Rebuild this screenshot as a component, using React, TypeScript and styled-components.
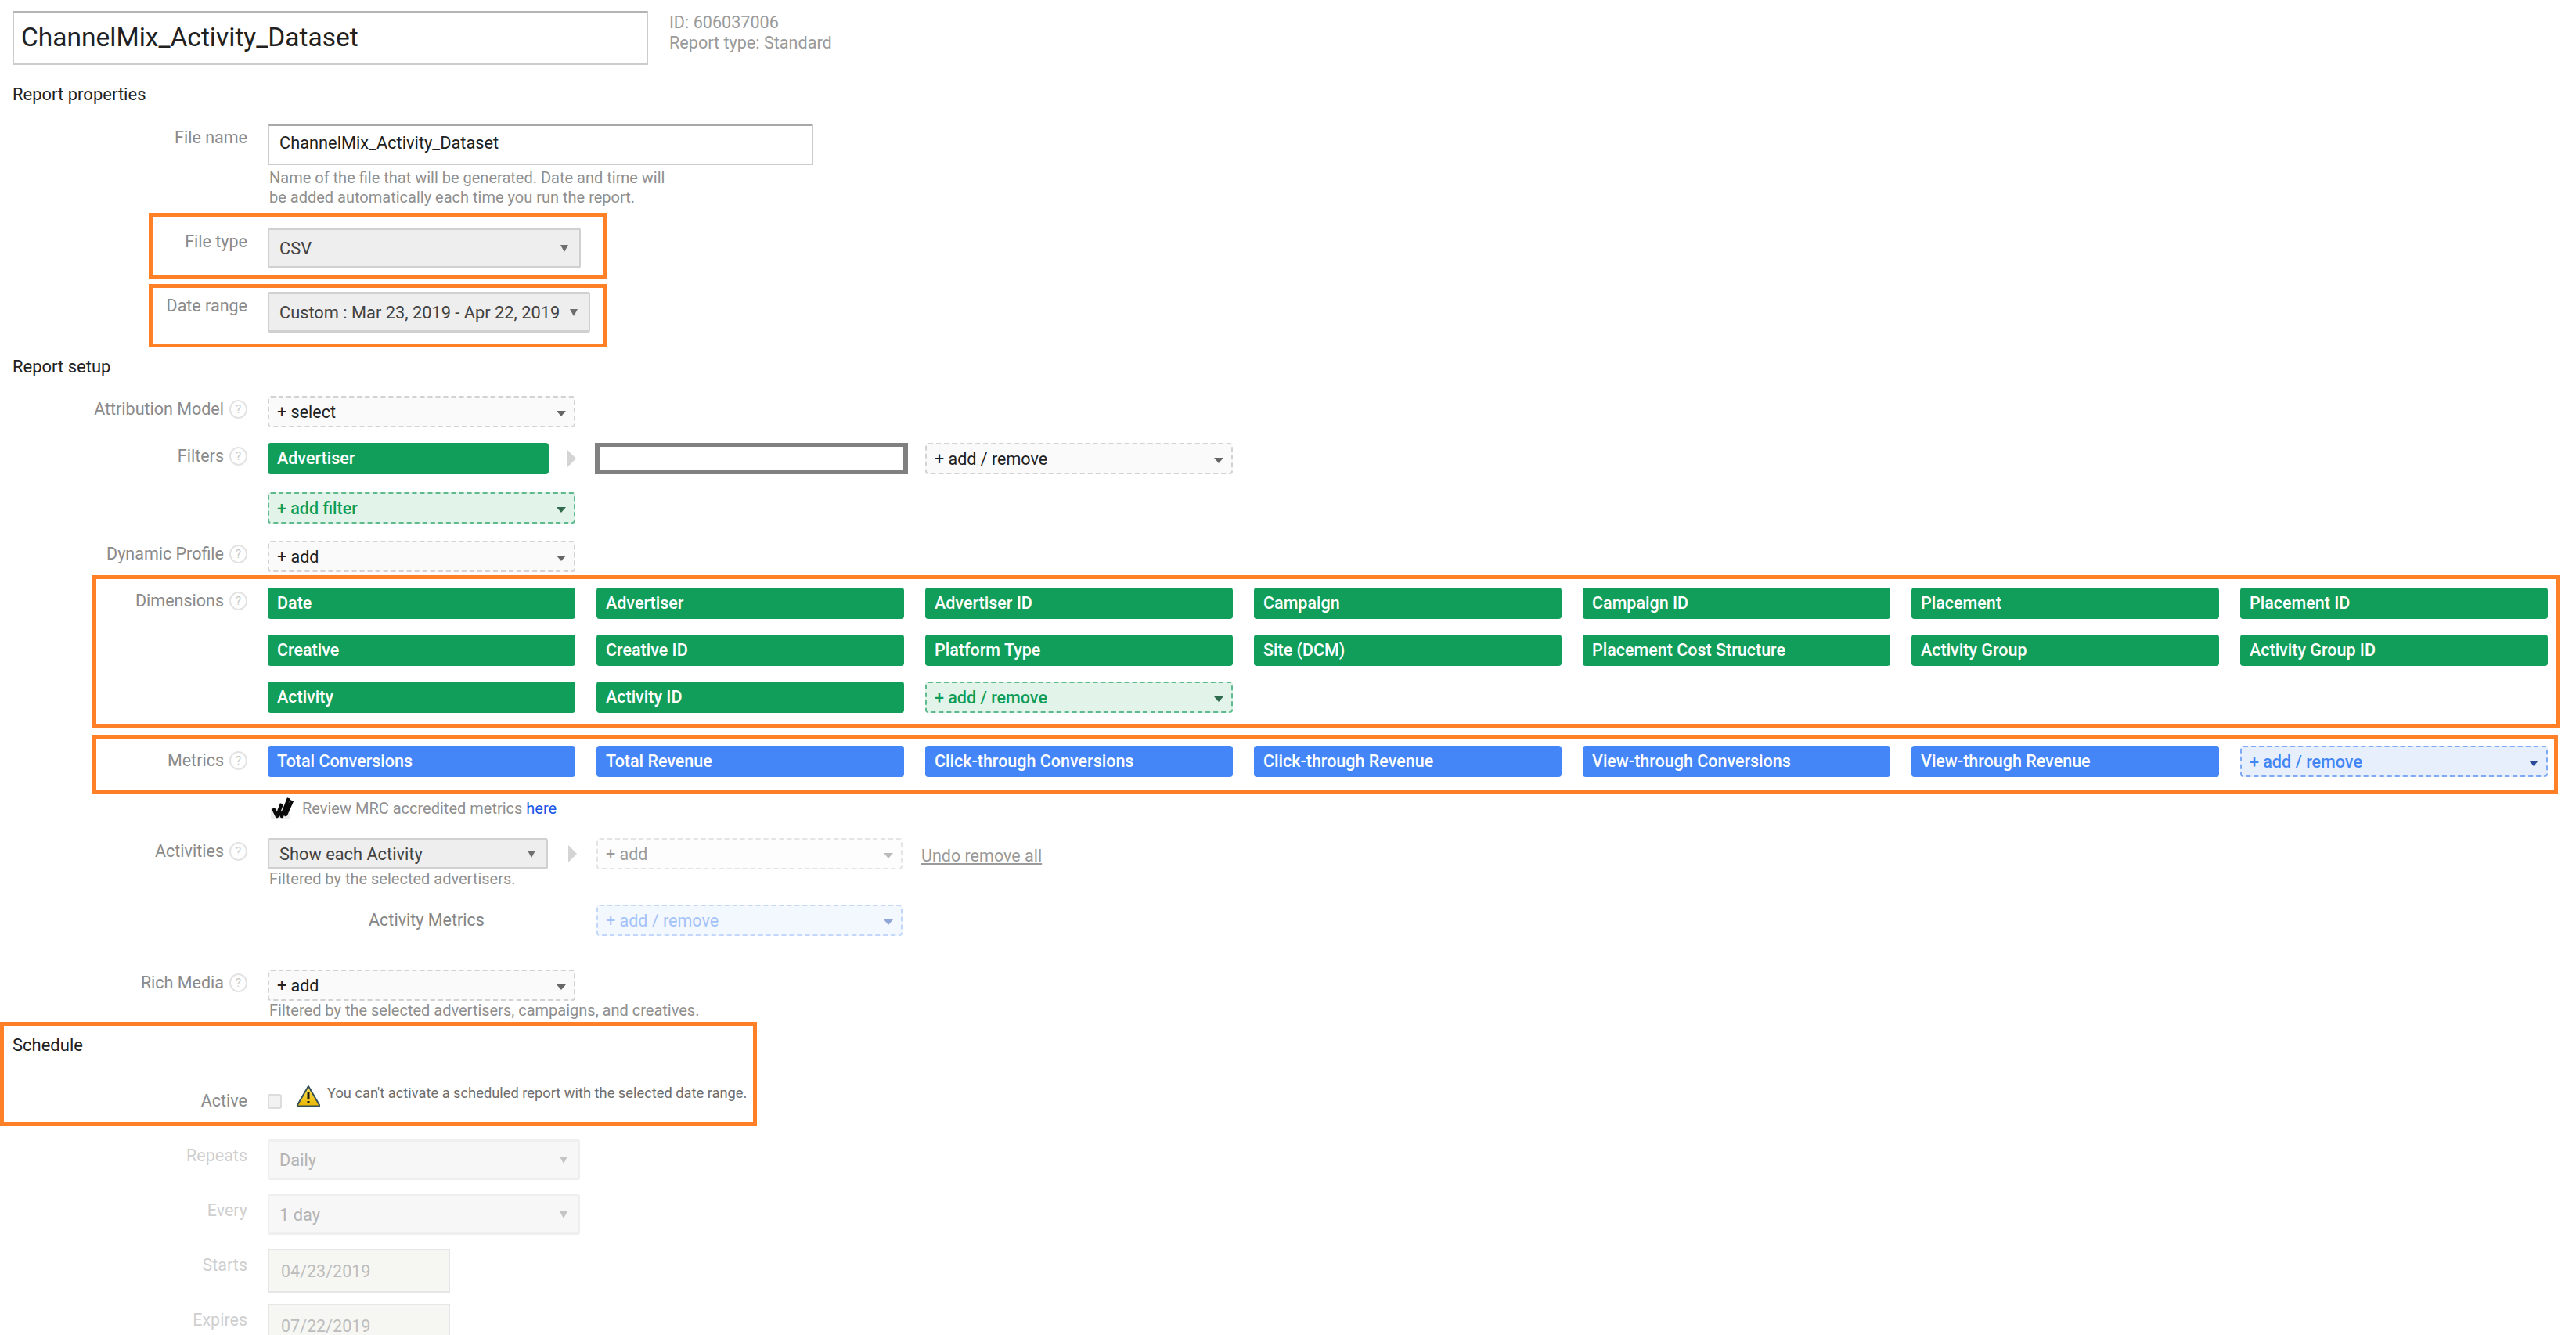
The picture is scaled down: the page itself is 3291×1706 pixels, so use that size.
import { FC, ReactNode } from "react";
import styled, { createGlobalStyle } from "styled-components";

type Tone = "neutral" | "green" | "blue" | "faint" | "paleBlue";

const dimensions = [
  "Date",
  "Advertiser",
  "Advertiser ID",
  "Campaign",
  "Campaign ID",
  "Placement",
  "Placement ID",
  "Creative",
  "Creative ID",
  "Platform Type",
  "Site (DCM)",
  "Placement Cost Structure",
  "Activity Group",
  "Activity Group ID",
  "Activity",
  "Activity ID",
];

const metrics = [
  "Total Conversions",
  "Total Revenue",
  "Click-through Conversions",
  "Click-through Revenue",
  "View-through Conversions",
  "View-through Revenue",
];

const tones = {
  neutral: { bg: "#fafafa", border: "#d2d2d2", text: "#212121", caret: "#666666" },
  green: { bg: "#e2f3ea", border: "#5dba8c", text: "#0f9d58", caret: "#2f6b4c" },
  blue: { bg: "#e8effc", border: "#7ea9f6", text: "#4285f4", caret: "#2b4a9a" },
  faint: { bg: "#fdfdfd", border: "#e4e4e4", text: "#9a9a9a", caret: "#bbbbbb" },
  paleBlue: { bg: "#f3f7fe", border: "#c3d7fb", text: "#a3c2f9", caret: "#8fa8d8" },
};

const GlobalStyle = createGlobalStyle`
  html, body {
    margin: 0;
    padding: 0;
    background: #ffffff;
    font-family: Roboto, "Liberation Sans", sans-serif;
    overflow: hidden;
  }
`;

const Page = styled.div`
  width: 3291px;
  height: 1706px;
  overflow: hidden;
  display: flex;
  flex-direction: column;
  position: relative;
`;

const TitleBar = styled.div`
  display: flex;
  margin: 14px 0 0 16px;
  gap: 27px;
`;

const TitleInput = styled.div`
  width: 812px;
  height: 69px;
  box-sizing: border-box;
  border: 2px solid #cccccc;
  border-top: 3px solid #b4b4b4;
  padding-left: 9px;
  font-size: 33.5px;
  line-height: 62px;
  color: #212121;
`;

const ReportMeta = styled.div`
  font-size: 21.6px;
  line-height: 26px;
  color: #9a9a9a;
  padding-top: 2px;
`;

const Heading = styled.div<{ $top: number }>`
  position: relative;
  margin: ${(p) => p.$top}px 0 0 16px;
  font-size: 22px;
  line-height: 30px;
  color: #212121;
`;

const Row = styled.div<{ $top: number }>`
  position: relative;
  display: flex;
  gap: 26px;
  margin-top: ${(p) => p.$top}px;
`;

const LabelBox = styled.div<{ $pad: number; $muted?: boolean }>`
  width: 316px;
  flex: none;
  box-sizing: border-box;
  padding-top: ${(p) => p.$pad}px;
  display: flex;
  justify-content: flex-end;
  gap: 7px;
  font-size: 21.5px;
  line-height: 24px;
  color: ${(p) => (p.$muted ? "#cfcfcf" : "#8a8a8a")};
`;

const HelpIcon = styled.span`
  width: 23px;
  height: 24px;
  box-sizing: border-box;
  border: 2px solid #e3e3e3;
  border-radius: 50%;
  color: #c8c8c8;
  font-size: 15px;
  line-height: 20px;
  text-align: center;
`;

const Frame = styled.div<{ $left: number; $top: number; $width: number; $height: number }>`
  position: absolute;
  left: ${(p) => p.$left}px;
  top: ${(p) => p.$top}px;
  width: ${(p) => p.$width}px;
  height: ${(p) => p.$height}px;
  box-sizing: border-box;
  border: 5px solid #ff8027;
  pointer-events: none;
`;

const TextInput = styled.div`
  width: 697px;
  height: 53px;
  box-sizing: border-box;
  border: 2px solid #cccccc;
  border-top: 3px solid #a8a8a8;
  padding-left: 13px;
  font-size: 21.8px;
  line-height: 44px;
  color: #212121;
`;

const Hint = styled.div<{ $width?: number; $top?: number }>`
  margin: ${(p) => p.$top ?? 0}px 0 0 344px;
  width: ${(p) => p.$width ?? 900}px;
  font-size: 20px;
  line-height: 25px;
  color: #8f8f8f;
`;

const Select = styled.div<{ $width: number; $disabled?: boolean }>`
  width: ${(p) => p.$width}px;
  height: 52px;
  box-sizing: border-box;
  background: ${(p) => (p.$disabled ? "#f7f7f7" : "#eeeeee")};
  border: 2px solid ${(p) => (p.$disabled ? "#efefef" : "#d0d0d0")};
  border-top-width: 3px;
  border-bottom-width: 3px;
  border-radius: 3px;
  padding: 0 14px 0 13px;
  display: flex;
  align-items: center;
  justify-content: space-between;
  font-size: 21.8px;
  white-space: nowrap;
  color: ${(p) => (p.$disabled ? "#b4b4b4" : "#424242")};
`;

const SelectCaret = styled.span<{ $disabled?: boolean }>`
  width: 0;
  height: 0;
  border-left: 5px solid transparent;
  border-right: 5px solid transparent;
  border-top: 9px solid ${(p) => (p.$disabled ? "#c4c4c4" : "#6e6e6e")};
`;

const ShortSelect = styled(Select)`
  height: 40px;
`;

const Chip = styled.div<{ $fill: "green" | "blue"; $width?: number }>`
  width: ${(p) => p.$width ?? 393}px;
  height: 40px;
  box-sizing: border-box;
  border-radius: 4px;
  padding-left: 12px;
  background: ${(p) => (p.$fill === "green" ? "#119e5a" : "#4486f8")};
  color: #ffffff;
  font-size: 21.5px;
  font-weight: 500;
  line-height: 40px;
  white-space: nowrap;
`;

const AddChip = styled.div<{ $tone: Tone; $width?: number }>`
  width: ${(p) => p.$width ?? 393}px;
  height: 40px;
  box-sizing: border-box;
  border-radius: 4px;
  padding: 0 10px;
  background: ${(p) => tones[p.$tone].bg};
  border: 2px dashed ${(p) => tones[p.$tone].border};
  color: ${(p) => tones[p.$tone].text};
  font-size: 21.5px;
  font-weight: ${(p) => (p.$tone === "green" || p.$tone === "blue" ? 500 : 400)};
  line-height: 35px;
  display: flex;
  justify-content: space-between;
  align-items: center;
  white-space: nowrap;
`;

const ChipCaret = styled.span<{ $tone: Tone }>`
  width: 0;
  height: 0;
  margin-top: 4px;
  border-left: 6px solid transparent;
  border-right: 6px solid transparent;
  border-top: 7px solid ${(p) => tones[p.$tone].caret};
`;

const ChipGrid = styled.div`
  display: grid;
  grid-template-columns: repeat(7, 393px);
  column-gap: 27px;
  row-gap: 20px;
`;

const FieldRow = styled.div`
  display: flex;
  align-items: center;
`;

const ArrowSlot = styled.div<{ $width: number }>`
  width: ${(p) => p.$width}px;
  display: flex;
  justify-content: center;
`;

const Arrow = styled.span`
  width: 0;
  height: 0;
  border-top: 11px solid transparent;
  border-bottom: 11px solid transparent;
  border-left: 11px solid #d4d4d4;
`;

const FocusInput = styled.div`
  width: 400px;
  height: 40px;
  box-sizing: border-box;
  border: 6px solid #808080;
  border-top-width: 5px;
  margin-right: 22px;
`;

const UndoLink = styled.span`
  margin: 5px 0 0 24px;
  color: #9a9a9a;
  font-size: 21.5px;
  text-decoration: underline;
`;

const ReviewRow = styled.div`
  display: flex;
  align-items: flex-end;
  gap: 10px;
  margin: 23px 0 0 345px;
  height: 31px;
  font-size: 20px;
  line-height: 27px;
  color: #8f8f8f;
`;

const ReviewLink = styled.span`
  color: #1a56e8;
`;

const SubLabel = styled.div`
  width: 406px;
  flex: none;
  margin: 0 14px 0 342px;
  text-align: center;
  font-size: 21.5px;
  line-height: 40px;
  color: #858585;
`;

const Checkbox = styled.span`
  display: block;
  width: 18px;
  height: 19px;
  box-sizing: border-box;
  border: 2px solid #dcdcdc;
  border-radius: 3px;
  background: #f2f2f2;
`;

const ActiveField = styled.div`
  display: flex;
  align-items: flex-start;
  height: 34px;
`;

const CheckSlot = styled.div`
  width: 36px;
  padding-top: 12px;
`;

const WarnText = styled.span`
  margin-left: 8px;
  font-size: 18.3px;
  line-height: 22px;
  color: #6e6e6e;
  white-space: nowrap;
`;

const DateInput = styled.div`
  width: 233px;
  height: 56px;
  box-sizing: border-box;
  background: #f6f7f3;
  border: 2px solid #e6e6e6;
  padding-left: 15px;
  font-size: 21.5px;
  line-height: 54px;
  color: #bdbdbd;
`;

const Label: FC<{ pad?: number; help?: boolean; muted?: boolean; children: ReactNode }> = ({
  pad = 5,
  help,
  muted,
  children,
}) => (
  <LabelBox $pad={pad} $muted={muted}>
    <span>{children}</span>
    {help && <HelpIcon>?</HelpIcon>}
  </LabelBox>
);

const Add: FC<{ tone: Tone; width?: number; children: ReactNode }> = ({ tone, width, children }) => (
  <AddChip $tone={tone} $width={width}>
    <span>{children}</span>
    <ChipCaret $tone={tone} />
  </AddChip>
);

const MrcIcon = () => (
  <svg width="31" height="32" viewBox="0 0 31 32">
    <rect x="1" y="17" width="25" height="14" fill="#ececec" />
    <path
      d="M4 18 L9 28 L15 12 M11 20 L15 28 L24 5 M18 23 L20 26 L28 8"
      fill="none"
      stroke="#0a0a0a"
      strokeWidth="4.500"
      strokeLinejoin="round"
    />
  </svg>
);

const WarningIcon = () => (
  <svg width="32" height="29" viewBox="0 0 32 29">
    <defs>
      <linearGradient id="warnFill" x1="0" y1="0" x2="0" y2="1">
        <stop offset="0" stopColor="#ffe45c" />
        <stop offset="1" stopColor="#e8b400" />
      </linearGradient>
    </defs>
    <path
      d="M16 2 L30 26 Q30.500 27.500 29 27.500 L3 27.500 Q1.500 27.500 2 26 Z"
      fill="url(#warnFill)"
      stroke="#34505a"
      strokeWidth="2"
      strokeLinejoin="round"
    />
    <rect x="14.500" y="9" width="3" height="10" fill="#1a1a1a" />
    <rect x="14.500" y="21" width="3" height="3" fill="#1a1a1a" />
  </svg>
);

const App: FC = () => {
  return (
    <Page>
      <GlobalStyle />
      <TitleBar>
        <TitleInput>ChannelMix_Activity_Dataset</TitleInput>
        <ReportMeta>
          ID: 606037006
          <br />
          Report type: Standard
        </ReportMeta>
      </TitleBar>

      <Heading $top={23}>Report properties</Heading>

      <Row $top={22}>
        <Label pad={6}>File name</Label>
        <TextInput>ChannelMix_Activity_Dataset</TextInput>
      </Row>
      <Hint $width={510} $top={4}>
        Name of the file that will be generated. Date and time will be added automatically each time you run the report.
      </Hint>

      <Row $top={26}>
        <Label pad={6}>File type</Label>
        <Select $width={400}>
          CSV
          <SelectCaret />
        </Select>
        <Frame $left={190} $top={-19} $width={585} $height={85} />
      </Row>

      <Row $top={30}>
        <Label pad={6}>Date range</Label>
        <Select $width={412}>
          Custom : Mar 23, 2019 - Apr 22, 2019
          <SelectCaret />
        </Select>
        <Frame $left={190} $top={-10} $width={585} $height={81} />
      </Row>

      <Heading $top={29}>Report setup</Heading>

      <Row $top={22}>
        <Label help>Attribution Model</Label>
        <Add tone="neutral">+ select</Add>
      </Row>

      <Row $top={20}>
        <Label help>Filters</Label>
        <FieldRow>
          <Chip $fill="green" $width={359}>
            Advertiser
          </Chip>
          <ArrowSlot $width={59}>
            <Arrow />
          </ArrowSlot>
          <FocusInput />
          <Add tone="neutral">+ add / remove</Add>
        </FieldRow>
      </Row>

      <Row $top={23}>
        <LabelBox $pad={0} />
        <Add tone="green">+ add filter</Add>
      </Row>

      <Row $top={22}>
        <Label help>Dynamic Profile</Label>
        <Add tone="neutral">+ add</Add>
      </Row>

      <Row $top={20}>
        <Label help>Dimensions</Label>
        <ChipGrid>
          {dimensions.map((name) => (
            <Chip key={name} $fill="green">
              {name}
            </Chip>
          ))}
          <Add tone="green">+ add / remove</Add>
        </ChipGrid>
        <Frame $left={118} $top={-16} $width={3152} $height={195} />
      </Row>

      <Row $top={42}>
        <Label help pad={7}>
          Metrics
        </Label>
        <ChipGrid>
          {metrics.map((name) => (
            <Chip key={name} $fill="blue">
              {name}
            </Chip>
          ))}
          <Add tone="blue">+ add / remove</Add>
        </ChipGrid>
        <Frame $left={118} $top={-14} $width={3150} $height={76} />
      </Row>

      <ReviewRow>
        <MrcIcon />
        <span>
          Review MRC accredited metrics <ReviewLink>here</ReviewLink>
        </span>
      </ReviewRow>

      <Row $top={24}>
        <Label help>Activities</Label>
        <FieldRow>
          <ShortSelect $width={358}>
            Show each Activity
            <SelectCaret />
          </ShortSelect>
          <ArrowSlot $width={62}>
            <Arrow />
          </ArrowSlot>
          <Add tone="faint" width={391}>
            + add
          </Add>
          <UndoLink>Undo remove all</UndoLink>
        </FieldRow>
      </Row>
      <Hint>Filtered by the selected advertisers.</Hint>

      <Row $top={20}>
        <FieldRow>
          <SubLabel>Activity Metrics</SubLabel>
          <Add tone="paleBlue" width={391}>
            + add / remove
          </Add>
        </FieldRow>
      </Row>

      <Row $top={43}>
        <Label help>Rich Media</Label>
        <Add tone="neutral">+ add</Add>
      </Row>
      <Hint>Filtered by the selected advertisers, campaigns, and creatives.</Hint>

      <Heading $top={17}>
        Schedule
        <Frame $left={-16} $top={-15} $width={967} $height={133} />
      </Heading>

      <Row $top={35}>
        <Label pad={9}>Active</Label>
        <ActiveField>
          <CheckSlot>
            <Checkbox />
          </CheckSlot>
          <WarningIcon />
          <WarnText>You can't activate a scheduled report with the selected date range.</WarnText>
        </ActiveField>
      </Row>

      <Row $top={36}>
        <Label pad={9} muted>
          Repeats
        </Label>
        <Select $width={399} $disabled>
          Daily
          <SelectCaret $disabled />
        </Select>
      </Row>

      <Row $top={18}>
        <Label pad={9} muted>
          Every
        </Label>
        <Select $width={399} $disabled>
          1 day
          <SelectCaret $disabled />
        </Select>
      </Row>

      <Row $top={18}>
        <Label pad={9} muted>
          Starts
        </Label>
        <DateInput>04/23/2019</DateInput>
      </Row>

      <Row $top={14}>
        <Label pad={9} muted>
          Expires
        </Label>
        <DateInput>07/22/2019</DateInput>
      </Row>
    </Page>
  );
};

export default App;
